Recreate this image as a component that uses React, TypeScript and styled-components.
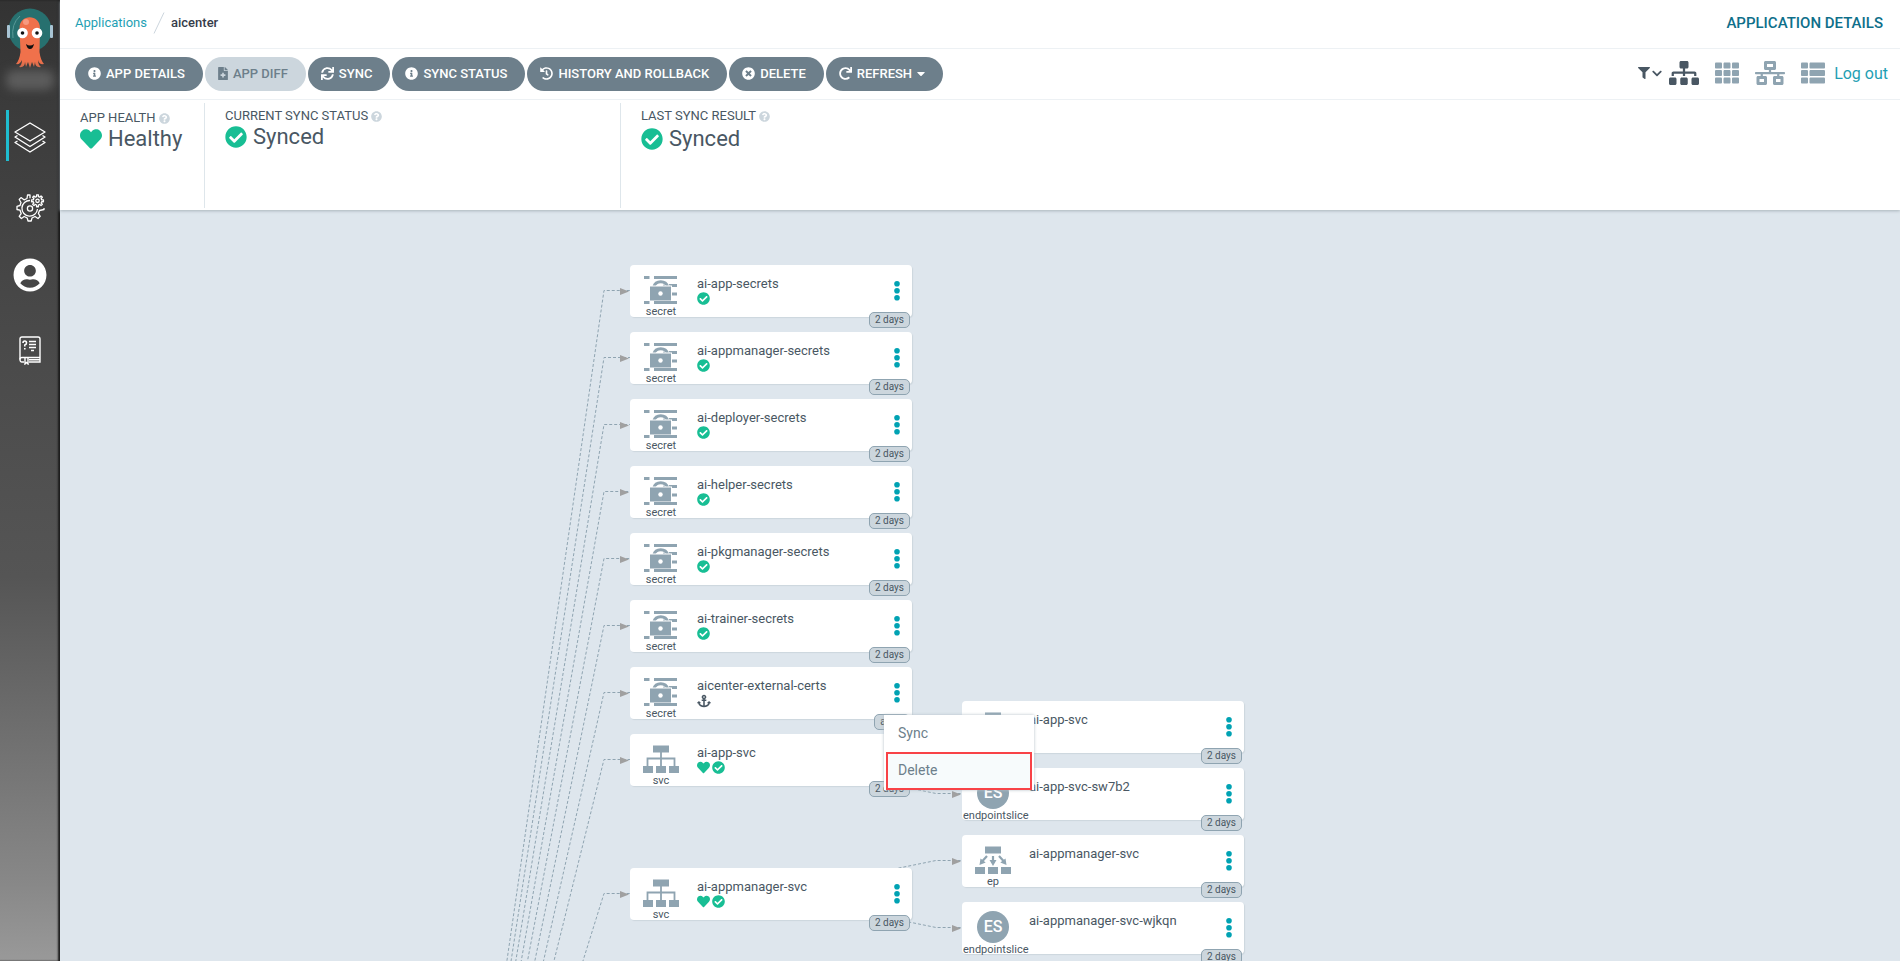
import React from 'react';
import styled, { createGlobalStyle } from 'styled-components';
import {
  FaInfoCircle, FaFileMedical, FaSync, FaHistory, FaTimesCircle, FaRedo, FaCaretDown,
  FaQuestionCircle, FaHeart, FaCheckCircle, FaAnchor, FaFilter, FaSitemap, FaTh,
  FaNetworkWired, FaThList, FaUserCircle, FaChevronDown,
} from 'react-icons/fa';

const colors = {
  ink: '#495763',
  button: '#6d7f8b',
  muted: '#8fa4b1',
  pale: '#ccd6dd',
  line: '#dee6eb',
  teal: '#1f9fb4',
  green: '#18be94',
  canvas: '#dee6ed',
};

const Global = createGlobalStyle`
  * { box-sizing: border-box; }
  html, body, #root { height: 100%; }
  body { margin: 0; font-family: Roboto, "Liberation Sans", sans-serif; font-size: 14px; color: #495763; overflow: hidden; }
  button { font: inherit; color: inherit; border: 0; background: none; padding: 0; cursor: pointer; }
  a { text-decoration: none; }
  svg { display: block; flex: none; }
`;

const Page = styled.div`
  display: flex;
  height: 100%;
`;

const Sidebar = styled.nav`
  flex: none;
  width: 60px;
  display: flex;
  flex-direction: column;
  background: linear-gradient(#333 0%, #3d3d3d 14%, #484848 32%, #555 60%, #888 92%, #999 100%);
  box-shadow: inset -2px 0 2px #1c1c1c;
`;

const Logo = styled.a`
  display: flex;
  justify-content: center;
  padding-top: 8px;
  height: 70px;
`;

const Version = styled.div`
  height: 20px;
  margin: 0 6px;
  border-radius: 8px;
  background: #5c5c5c;
  filter: blur(5px);
`;

const SideLink = styled.a<{ $active?: boolean }>`
  display: flex;
  align-items: center;
  justify-content: center;
  height: 51px;
  margin: 20px 0 0 6px;
  padding: 3px 9px 0 0;
  color: #fff;
  border-left: 3px solid ${p => (p.$active ? '#1fbdd0' : 'transparent')};
`;

const UserIcon = styled(FaUserCircle)`
  margin-bottom: 8px;
`;

const FileIcon = styled(FaFileMedical)`
  width: 10px;
`;

const CaretIcon = styled(FaCaretDown)`
  width: 8px;
`;

const ChevronIcon = styled(FaChevronDown)`
  width: 10px;
`;

const Main = styled.main`
  flex: 1;
  min-width: 0;
  display: flex;
  flex-direction: column;
`;

const Header = styled.header`
  position: relative;
  z-index: 1;
  flex: none;
  background: #fff;
  box-shadow: 0 1px 3px #a9b4bb;
`;

const TopBar = styled.div`
  display: flex;
  align-items: center;
  justify-content: space-between;
  height: 49px;
  padding: 0 17px 3px 15px;
  border-bottom: 1px solid #edf1f4;
`;

const Crumbs = styled.div`
  display: flex;
  align-items: center;
  gap: 6px;
  font-size: 13px;
  color: #363c4a;
  font-weight: 500;
  a { color: ${colors.teal}; font-weight: 400; }
`;

const PageTitle = styled.h1`
  margin: 0;
  font-size: 15px;
  line-height: 20px;
  font-weight: 500;
  color: #0e6f8a;
`;

const ToolBar = styled.div`
  display: flex;
  align-items: center;
  justify-content: space-between;
  height: 51px;
  padding: 0 12px 0 15px;
  border-bottom: 1px solid #edf1f4;
`;

const Group = styled.div`
  display: flex;
  align-items: center;
  gap: 2px;
`;

const Pill = styled.button`
  display: flex;
  align-items: center;
  gap: 5px;
  height: 34px;
  padding: 0 18px 2px 13px;
  border-radius: 17px;
  background: ${colors.button};
  color: #fff;
  font-size: 13px;
  font-weight: 500;
  text-transform: uppercase;
  white-space: nowrap;
  &:disabled { background: ${colors.pale}; color: ${colors.button}; }
`;

const Views = styled.div`
  display: flex;
  align-items: center;
  padding-bottom: 2px;
`;

const ViewButton = styled.button<{ $active?: boolean; $wide?: boolean }>`
  display: flex;
  align-items: center;
  justify-content: center;
  width: 43px;
  height: 34px;
  color: ${p => (p.$active ? colors.ink : colors.muted)};
  svg { width: ${p => (p.$wide ? 30 : 24)}px; }
`;

const FilterButton = styled.button`
  display: flex;
  align-items: center;
  gap: 2px;
  color: ${colors.ink};
`;

const LogOut = styled.a`
  font-size: 16px;
  color: ${colors.teal};
`;

const StatusRow = styled.div`
  display: flex;
  height: 110px;
  padding: 3px 0 2px;
`;

const StatusItem = styled.section<{ $width: number; $top: number; $gap?: number }>`
  display: flex;
  flex-direction: column;
  gap: ${p => p.$gap ?? 0}px;
  width: ${p => p.$width}px;
  padding: ${p => p.$top}px 0 0 20px;
  border-right: 1px solid ${colors.line};
  &:last-child { border-right: 0; }
`;

const StatusLabel = styled.div`
  display: flex;
  align-items: center;
  gap: 3px;
  font-size: 13px;
  line-height: 16px;
  text-transform: uppercase;
  white-space: nowrap;
  svg { color: ${colors.pale}; }
`;

const StatusValue = styled.div`
  display: flex;
  align-items: center;
  gap: 6px;
  font-size: 22px;
  line-height: 25px;
  svg { color: ${colors.green}; }
`;

const Canvas = styled.div`
  position: relative;
  flex: 1;
  overflow: hidden;
  background: ${colors.canvas};
`;

const Edges = styled.svg`
  position: absolute;
  inset: 0;
  width: 100%;
  height: 100%;
`;

const NodeCard = styled.article<{ $x: number; $y: number }>`
  position: absolute;
  left: ${p => p.$x}px;
  top: ${p => p.$y}px;
  width: 282px;
  height: 52px;
  display: flex;
  background: #fff;
  border-radius: 4px;
  box-shadow: 1px 1px 1px ${colors.pale};
`;

const Kind = styled.div`
  flex: none;
  width: 62px;
  display: flex;
  flex-direction: column;
  align-items: center;
  padding-top: 10px;
`;

const KindIcon = styled.div`
  height: 31px;
`;

const KindLabel = styled.div`
  width: 60px;
  font-size: 11px;
  line-height: 13px;
  text-align: center;
`;

const Info = styled.div`
  flex: 1;
  padding: 10px 0 0 5px;
  font-size: 13px;
  line-height: 17px;
  white-space: nowrap;
`;

const Marks = styled.div`
  display: flex;
  gap: 2px;
  color: ${colors.green};
`;

const More = styled.button`
  width: 30px;
  display: flex;
  align-items: center;
  justify-content: center;
`;

const Age = styled.span`
  position: absolute;
  right: 2px;
  bottom: -11px;
  padding: 0 5px;
  border: 1px solid ${colors.muted};
  border-radius: 5px;
  background: ${colors.pale};
  font-size: 10px;
  line-height: 14px;
`;

const Menu = styled.div`
  position: absolute;
  left: 824px;
  top: 505px;
  width: 150px;
  background: #fff;
  box-shadow: 0 0 3px #b5c0c8;
`;

const MenuItem = styled.button<{ $marked?: boolean }>`
  display: block;
  width: ${p => (p.$marked ? 146 : 150)}px;
  height: ${p => (p.$marked ? 38 : 37)}px;
  margin-left: ${p => (p.$marked ? 2 : 0)}px;
  padding: 0 0 2px ${p => (p.$marked ? 10 : 14)}px;
  text-align: left;
  color: ${colors.button};
  background: ${p => (p.$marked ? '#f7fbfc' : '#fff')};
  border: ${p => (p.$marked ? '2px solid #f84247' : '0')};
`;

const ArgoLogo = () => (
  <svg width="46" height="62" viewBox="0 0 46 62">
    <circle cx="23" cy="22" r="21.500" fill="#27706f" />
    <rect x="0" y="17" width="3" height="13" rx="1" fill="#a8c4d4" />
    <rect x="43" y="17" width="3" height="13" rx="1" fill="#a8c4d4" />
    <path d="M6 30 Q4 16 13 8" fill="none" stroke="#5a9a98" strokeWidth="1" />
    <path d="M12.500 20 C12.500 5.500 33 5.500 33 20 L32.500 44 Q33.500 52 37 56 Q32 57 31 52 Q31 57 34 59 Q28 60 28 54 L27 59 L25 54 L23 60 L21 54 L19 59 L18 54 Q18 60 12 59 Q15 57 15 52 Q13 57 9 56 Q12.500 52 13.500 44 Z" fill="#f0714b" />
    <circle cx="19" cy="14" r="3" fill="#f79a80" />
    <circle cx="15.500" cy="25" r="5.300" fill="#fff" />
    <circle cx="30" cy="25" r="5.300" fill="#fff" />
    <circle cx="15.500" cy="25" r="1.800" fill="#111" />
    <circle cx="30" cy="25" r="1.800" fill="#111" />
    <path d="M19 36 Q23 39 27 36 Q26 41 23 41 Q20 41 19 36" fill="#111" />
  </svg>
);

const LayersIcon = () => (
  <svg width="32" height="31" viewBox="0 0 32 31" fill="none" stroke="#fff" strokeWidth="1.400" strokeLinejoin="round">
    <path d="M16 1 L31 10 L16 19 L1 10 Z" />
    <path d="M3.500 13.500 L1 15 L16 24.500 L31 15 L28.500 13.500" />
    <path d="M3.500 19 L1 20.500 L16 30 L31 20.500 L28.500 19" />
  </svg>
);

const gearPath = (cx: number, cy: number, r: number, tooth: number, n: number) => {
  const pts: string[] = [];
  for (let i = 0; i < n; i++) {
    const a = (i / n) * Math.PI * 2 - Math.PI / 2;
    const s = Math.PI / n;
    [[-0.55, r], [-0.4, r + tooth], [0.4, r + tooth], [0.55, r]].forEach(([o, q]) => {
      pts.push(`${(cx + Math.cos(a + s * o) * q).toFixed(2)} ${(cy + Math.sin(a + s * o) * q).toFixed(2)}`);
    });
  }
  return `M${pts.join('L')}Z`;
};

const GearsIcon = () => (
  <svg width="29" height="28" viewBox="0 0 29 28" fill="none" stroke="#fff" strokeWidth="1.300" strokeLinejoin="round">
    <path d="M14 4.200 V1 H11.500 L11 4.500 L8 5.800 L5 3.600 L3.200 5.500 L5 8.500 L4 11.500 L1 12.300 V15.500 L4 16.200 L5.200 19.500 L3.200 22.300 L5.400 24.500 L8.200 22.500 L11.200 24 L12 27 H15.200 L16 24 L19 22.500 L22 24.500 L24.200 22.300 L22.400 19.500 L23.500 16.500 L28 15.500 V14" />
    <path d="M14 6.500 A7.800 7.800 0 1 0 21.500 15" />
    <circle cx="14" cy="14.500" r="2.600" />
    <path d={gearPath(21.5, 6.8, 4.3, 1.7, 8)} />
    <circle cx="21.500" cy="6.800" r="1.700" />
  </svg>
);

const DocsIcon = () => (
  <svg width="22" height="29" viewBox="0 0 22 29" fill="none" stroke="#fff" strokeWidth="1.400">
    <path d="M5 26 H3 Q1 26 1 23.500 V3 Q1 1 3 1 H19 Q21 1 21 3 V26 H10" />
    <path d="M1 23.500 Q1 21.500 3 21.500 H21 M10 23.700 H21" />
    <path d="M6 22 V28 L7.500 26.500 L9 28 V22" />
    <path d="M4 7 Q4 5 5.800 5 Q7.500 5 7.500 7 Q7.500 8.500 5.800 9 V10.500 M5.800 12 V13.500" strokeWidth="1.600" />
    <path d="M10 5.500 H17 M10 8.500 H17 M10 11.500 H17 M12 14.500 H15" />
  </svg>
);

const SecretIcon = () => (
  <svg width="34" height="30" viewBox="0 0 34 30" fill={colors.muted}>
    <path d="M0 1h5.500v3H0zM10 1h23v3H10zM22 9h11v3H22zM28 17.500h5v3h-5zM0 26h5.500v3H0zM10 26h23v3H10z" />
    <path d="M7.500 12 A9.500 9.500 0 0 1 26 12" fill="#fff" />
    <path d="M9.800 12 A7.200 7 0 0 1 23.700 12" fill="none" stroke={colors.muted} strokeWidth="3" />
    <path d="M18.500 11.500l1.500-2.500 1.500 2.500z" />
    <rect x="5" y="10.500" width="23" height="15" fill="#fff" />
    <rect x="6" y="11.500" width="21" height="14" />
    <circle cx="16.500" cy="18.500" r="2.200" fill="#fff" />
  </svg>
);

const ServiceIcon = () => (
  <svg width="38" height="30" viewBox="0 0 38 30" fill={colors.muted}>
    <path d="M11 1.500h16v7H11zM1 22h10v7H1zM14 22h10v7H14zM27 22h10v7H27z" />
    <path d="M19 8v14M5.500 22v-7.500h27V22" fill="none" stroke={colors.muted} strokeWidth="1.800" />
  </svg>
);

const EndpointIcon = () => (
  <svg width="38" height="30" viewBox="0 0 38 30" fill={colors.muted}>
    <path d="M11 1.500h16v7H11zM1 22h10v7H1zM14 22h10v7H14zM27 22h10v7H27z" />
    <path d="M19 11v6M13 11l-4.500 5M25 11l4.500 5" fill="none" stroke={colors.muted} strokeWidth="2.200" />
    <path d="M15.500 15h7l-3.500 6zM5.500 20l1-6.500 5.200 4zM32.500 20l-1-6.500-5.200 4z" />
  </svg>
);

const SliceIcon = styled.div`
  width: 32px;
  height: 32px;
  margin-top: -1px;
  border-radius: 50%;
  background: ${colors.muted};
  color: #fff;
  font-size: 16px;
  font-weight: 500;
  line-height: 32px;
  text-align: center;
`;

type KindName = 'secret' | 'svc' | 'ep' | 'endpointslice';
type Mark = 'healthy' | 'synced' | 'hook';
type GraphNode = { name: string; kind: KindName; x: number; y: number; marks: Mark[]; age: string };

const icons: Record<KindName, React.ReactNode> = {
  secret: <SecretIcon />,
  svc: <ServiceIcon />,
  ep: <EndpointIcon />,
  endpointslice: <SliceIcon>ES</SliceIcon>,
};

const markIcons: Record<Mark, React.ReactNode> = {
  healthy: <FaHeart size={13} />,
  synced: <FaCheckCircle size={13} />,
  hook: <FaAnchor size={14} color={colors.ink} />,
};

const resource = (name: string, kind: KindName, y: number, marks: Mark[], age = '2 days'): GraphNode =>
  ({ name, kind, x: 570, y, marks, age });
const child = (name: string, kind: KindName, y: number): GraphNode =>
  ({ name, kind, x: 902, y, marks: [], age: '2 days' });

const resources = [
  resource('ai-app-secrets', 'secret', 55, ['synced']),
  resource('ai-appmanager-secrets', 'secret', 122, ['synced']),
  resource('ai-deployer-secrets', 'secret', 189, ['synced']),
  resource('ai-helper-secrets', 'secret', 256, ['synced']),
  resource('ai-pkgmanager-secrets', 'secret', 323, ['synced']),
  resource('ai-trainer-secrets', 'secret', 390, ['synced']),
  resource('aicenter-external-certs', 'secret', 457, ['hook'], 'a day'),
  resource('ai-app-svc', 'svc', 524, ['healthy', 'synced']),
  resource('ai-appmanager-svc', 'svc', 658, ['healthy', 'synced']),
];
const children = [
  child('ai-app-svc', 'ep', 491),
  child('ai-app-svc-sw7b2', 'endpointslice', 558),
  child('ai-appmanager-svc', 'ep', 625),
  child('ai-appmanager-svc-wjkqn', 'endpointslice', 692),
];

const Edge = ({ from, to }: { from: [number, number]; to: GraphNode }) => {
  const y = to.y + 25;
  return (
    <g>
      <path
        d={`M${from[0]} ${from[1]}L${to.x - 26} ${y + 0.5}H${to.x}`}
        fill="none" stroke={colors.muted} strokeDasharray="3 2" strokeWidth="1"
      />
      <path d={`M${to.x - 10} ${y - 2}l9 3.500l-9 3.500z`} fill="#a0a0a0" />
    </g>
  );
};

const Node = ({ node }: { node: GraphNode }) => (
  <NodeCard $x={node.x} $y={node.y}>
    <Kind>
      <KindIcon>{icons[node.kind]}</KindIcon>
      <KindLabel>{node.kind}</KindLabel>
    </Kind>
    <Info>
      {node.name}
      <Marks>{node.marks.map(m => <React.Fragment key={m}>{markIcons[m]}</React.Fragment>)}</Marks>
    </Info>
    <More aria-label={`Actions for ${node.name}`}>
      <svg width="6" height="20" viewBox="0 0 6 20" fill="#00a2b3">
        <circle cx="3" cy="2.800" r="2.800" /><circle cx="3" cy="9.800" r="2.800" /><circle cx="3" cy="16.800" r="2.800" />
      </svg>
    </More>
    <Age>{node.age}</Age>
  </NodeCard>
);

export default function App() {
  return (
    <Page>
      <Global />
      <Sidebar>
        <Logo href="#" aria-label="Home"><ArgoLogo /></Logo>
        <Version />
        <SideLink $active href="#" aria-label="Applications"><LayersIcon /></SideLink>
        <SideLink href="#" aria-label="Settings"><GearsIcon /></SideLink>
        <SideLink href="#" aria-label="User"><UserIcon size={34} /></SideLink>
        <SideLink href="#" aria-label="Documentation"><DocsIcon /></SideLink>
      </Sidebar>
      <Main>
        <Header>
          <TopBar>
            <Crumbs>
              <a href="#">Applications</a>
              <svg width="12" height="22" viewBox="0 0 12 22"><path d="M1 21.500L11 .5" stroke={colors.pale} /></svg>
              <span>aicenter</span>
            </Crumbs>
            <PageTitle>APPLICATION DETAILS</PageTitle>
          </TopBar>
          <ToolBar>
            <Group>
              <Pill><FaInfoCircle />App details</Pill>
              <Pill disabled><FileIcon />App diff</Pill>
              <Pill><FaSync />Sync</Pill>
              <Pill><FaInfoCircle />Sync status</Pill>
              <Pill><FaHistory />History and rollback</Pill>
              <Pill><FaTimesCircle />Delete</Pill>
              <Pill><FaRedo />Refresh<CaretIcon /></Pill>
            </Group>
            <Views>
              <FilterButton aria-label="Filter"><FaFilter size={12} /><ChevronIcon size={11} /></FilterButton>
              <ViewButton $active $wide aria-label="Tree"><FaSitemap size={24} /></ViewButton>
              <ViewButton aria-label="Pods"><FaTh size={24} /></ViewButton>
              <ViewButton $wide aria-label="Network"><FaNetworkWired size={24} /></ViewButton>
              <ViewButton aria-label="List"><FaThList size={24} /></ViewButton>
              <LogOut href="#">Log out</LogOut>
            </Views>
          </ToolBar>
          <StatusRow>
            <StatusItem $width={145} $top={7}>
              <StatusLabel>App health <FaQuestionCircle size={11} /></StatusLabel>
              <StatusValue><FaHeart size={22} />Healthy</StatusValue>
            </StatusItem>
            <StatusItem $width={416} $top={5}>
              <StatusLabel>Current sync status <FaQuestionCircle size={11} /></StatusLabel>
              <StatusValue><FaCheckCircle size={22} />Synced</StatusValue>
            </StatusItem>
            <StatusItem $width={416} $top={5} $gap={2}>
              <StatusLabel>Last sync result <FaQuestionCircle size={11} /></StatusLabel>
              <StatusValue><FaCheckCircle size={22} />Synced</StatusValue>
            </StatusItem>
          </StatusRow>
        </Header>
        <Canvas>
          <Edges>
            {resources.map(n => <Edge key={n.name} from={[381, 1206]} to={n} />)}
            {children.map((n, i) => <Edge key={n.name} from={[711, i < 2 ? 550 : 684]} to={n} />)}
          </Edges>
          {resources.concat(children).map(n => <Node key={n.x + n.name} node={n} />)}
          <Menu role="menu">
            <MenuItem role="menuitem">Sync</MenuItem>
            <MenuItem role="menuitem" $marked>Delete</MenuItem>
          </Menu>
        </Canvas>
      </Main>
    </Page>
  );
}
